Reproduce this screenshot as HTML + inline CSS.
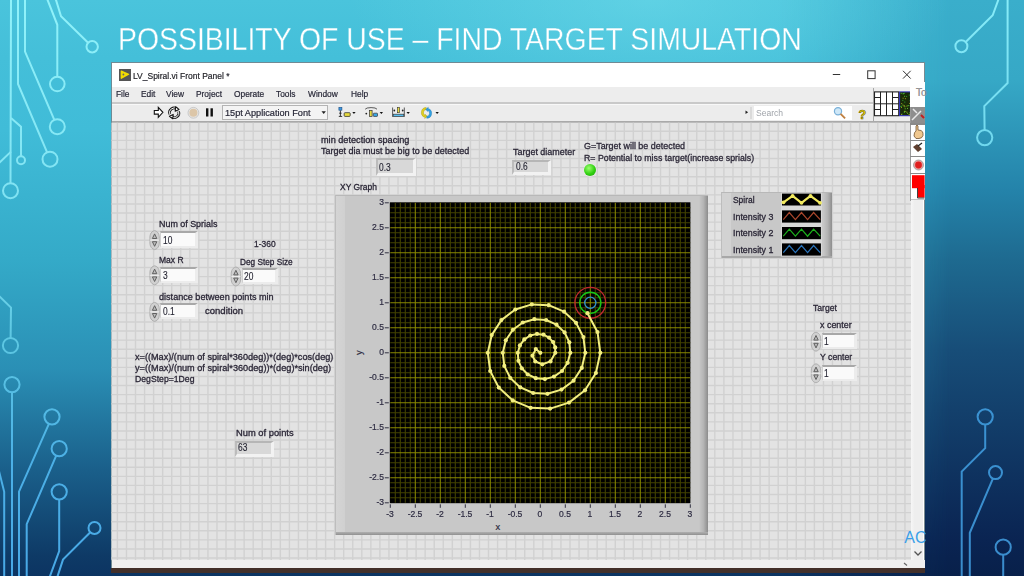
<!DOCTYPE html><html><head><meta charset="utf-8"><style>*{margin:0;padding:0;box-sizing:border-box}
html,body{width:1024px;height:576px;overflow:hidden}
body{position:relative;font-family:"Liberation Sans",sans-serif;background:linear-gradient(180deg,#4ac4dc 0%,#44bfd9 10%,#40bcd8 22.6%,#34aac8 45.1%,#2a8fb5 64.2%,#1a5f8a 81.6%,#0e3a66 96.5%,#0c3462 100%)}
.abs{position:absolute;white-space:pre}
.lbl{position:absolute;white-space:pre;font-size:9px;color:#2a2636;line-height:1;-webkit-text-stroke:0.3px #2a2636}
.num{position:absolute;white-space:pre;font-size:10px;line-height:1;color:#1e1e2c;transform-origin:0 0;transform:scaleX(0.84);-webkit-text-stroke:0.12px #1e1e2c}
.menu{position:absolute;white-space:pre;font-size:9.3px;color:#262636;line-height:1;-webkit-text-stroke:0.2px #262636}
.tick{position:absolute;white-space:pre;font-size:9.3px;color:#2c2a40;line-height:1;-webkit-text-stroke:0.2px #2c2a40}
</style></head><body><div class="abs" style="left:0;top:0;width:1024px;height:576px;background:linear-gradient(180deg,#3aaecb 0%,#36a8c6 13.9%,#2483aa 33%,#1e6a90 45.1%,#174d78 60.8%,#0a2452 93.75%,#08204a 100%);-webkit-mask-image:linear-gradient(90deg,transparent 0,transparent 780px,#000 950px);mask-image:linear-gradient(90deg,transparent 0,transparent 780px,#000 950px)"></div><div class="abs" style="left:0;top:0;width:1024px;height:576px;background:radial-gradient(ellipse 300px 120px at 650px 0px,rgba(120,225,238,0.45),rgba(120,225,238,0) 100%)"></div><svg width="1024" height="576" style="position:absolute;left:0;top:0"><defs><linearGradient id="cg" gradientUnits="userSpaceOnUse" x1="0" y1="0" x2="0" y2="576"><stop offset="0" stop-color="#90f2fa"/><stop offset="0.35" stop-color="#80e2f2"/><stop offset="0.6" stop-color="#5cc6e2"/><stop offset="0.8" stop-color="#4cb0e6"/><stop offset="1" stop-color="#48a8e6"/></linearGradient><linearGradient id="cg2" gradientUnits="userSpaceOnUse" x1="0" y1="0" x2="0" y2="576"><stop offset="0" stop-color="#88ecf8"/><stop offset="0.25" stop-color="#70d8ee"/><stop offset="0.72" stop-color="#3a92d2"/><stop offset="1" stop-color="#3a8ccc"/></linearGradient></defs><g fill="none" stroke="url(#cg)" stroke-width="2"><polyline points="11.0,-2.0 11.0,0.0 10.5,183.2"/><circle cx="10.5" cy="190.7" r="7.5"/><polyline points="11.0,118.0 21.0,126.7 21.0,156.2"/><circle cx="21.0" cy="160.2" r="4.0"/><polyline points="11.0,151.6 -1.0,163.0"/><polyline points="18.0,-2.0 18.0,84.0 47.1,152.3"/><circle cx="50.0" cy="159.2" r="7.5"/><polyline points="25.0,-2.0 25.0,51.6 54.3,119.8"/><circle cx="57.3" cy="126.7" r="7.5"/><polyline points="46.8,-2.0 57.3,24.8 57.3,76.7"/><circle cx="57.3" cy="84.0" r="7.3"/><polyline points="55.4,-2.0 61.0,16.2 88.1,42.8"/><circle cx="92.2" cy="46.8" r="5.7"/><polyline points="-2.0,295.0 11.0,307.6 10.6,337.9"/><circle cx="10.5" cy="345.5" r="7.6"/><polyline points="12.0,578.0 12.0,392.2"/><circle cx="12.0" cy="384.6" r="7.6"/><polyline points="19.0,578.0 19.0,491.7 48.9,423.8"/><circle cx="52.0" cy="416.8" r="7.6"/><polyline points="26.7,578.0 26.7,524.2 56.2,455.7"/><circle cx="59.2" cy="448.7" r="7.6"/><polyline points="49.3,578.0 59.2,551.0 59.2,499.4"/><circle cx="59.2" cy="491.8" r="7.6"/><polyline points="57.0,578.0 63.0,559.6 90.3,532.2"/><circle cx="94.5" cy="528.0" r="6.0"/><polyline points="-1.0,471.0 4.2,491.8 4.2,578.0"/></g><g fill="none" stroke="url(#cg2)" stroke-width="2"><polyline points="999.0,-2.0 992.7,15.3 965.7,42.0"/><circle cx="961.4" cy="46.2" r="6.0"/><polyline points="1007.6,-2.0 1007.6,83.0 984.3,106.1 984.6,130.0"/><circle cx="984.7" cy="137.6" r="7.6"/><polyline points="961.7,578.0 961.7,471.6 985.2,448.1 985.2,424.4"/><circle cx="985.2" cy="416.8" r="7.6"/><polyline points="969.8,578.0 969.8,532.8 992.9,478.6"/><circle cx="995.5" cy="472.6" r="6.5"/><polyline points="1003.2,578.0 1003.2,554.8"/><circle cx="1003.2" cy="547.2" r="7.6"/></g></svg><div class="abs" style="left:117.8px;top:22px;font-size:30.5px;line-height:34px;color:#fff;-webkit-text-stroke:0.35px #52c6dc;transform-origin:0 0;transform:scaleX(0.931)">POSSIBILITY OF USE – FIND TARGET SIMULATION</div><div class="abs" style="left:111px;top:62px;width:814px;height:511px;background:#fff;border-top:1px solid #708a94;border-left:1px solid #6f8a94;border-right:1px solid #5a7080"></div><div class="abs" style="left:111.5px;top:86.9px;width:813px;height:15px;background:#ededed"></div><div class="abs" style="left:111.5px;top:101.8px;width:813px;height:1.8px;background:#c9c9c9"></div><div class="abs" style="left:111.5px;top:103.6px;width:813px;height:1px;background:#f8f8f8"></div><div class="abs" style="left:111.5px;top:104.6px;width:813px;height:16.3px;background:#ececec"></div><div class="abs" style="left:111.5px;top:120.8px;width:813px;height:2px;background:#a9a9a9"></div><svg width="1024" height="576" style="position:absolute;left:0;top:0"><rect x="111.5" y="122.7" width="799.5" height="437.5" fill="#e3e3e3"/><path d="M117.40 122.7V560.2M126.45 122.7V560.2M135.50 122.7V560.2M144.56 122.7V560.2M153.61 122.7V560.2M162.66 122.7V560.2M171.71 122.7V560.2M180.76 122.7V560.2M189.82 122.7V560.2M198.87 122.7V560.2M207.92 122.7V560.2M216.97 122.7V560.2M226.02 122.7V560.2M235.08 122.7V560.2M244.13 122.7V560.2M253.18 122.7V560.2M262.23 122.7V560.2M271.28 122.7V560.2M280.34 122.7V560.2M289.39 122.7V560.2M298.44 122.7V560.2M307.49 122.7V560.2M316.54 122.7V560.2M325.60 122.7V560.2M334.65 122.7V560.2M343.70 122.7V560.2M352.75 122.7V560.2M361.80 122.7V560.2M370.86 122.7V560.2M379.91 122.7V560.2M388.96 122.7V560.2M398.01 122.7V560.2M407.06 122.7V560.2M416.12 122.7V560.2M425.17 122.7V560.2M434.22 122.7V560.2M443.27 122.7V560.2M452.32 122.7V560.2M461.38 122.7V560.2M470.43 122.7V560.2M479.48 122.7V560.2M488.53 122.7V560.2M497.58 122.7V560.2M506.64 122.7V560.2M515.69 122.7V560.2M524.74 122.7V560.2M533.79 122.7V560.2M542.84 122.7V560.2M551.90 122.7V560.2M560.95 122.7V560.2M570.00 122.7V560.2M579.05 122.7V560.2M588.10 122.7V560.2M597.16 122.7V560.2M606.21 122.7V560.2M615.26 122.7V560.2M624.31 122.7V560.2M633.36 122.7V560.2M642.42 122.7V560.2M651.47 122.7V560.2M660.52 122.7V560.2M669.57 122.7V560.2M678.62 122.7V560.2M687.68 122.7V560.2M696.73 122.7V560.2M705.78 122.7V560.2M714.83 122.7V560.2M723.88 122.7V560.2M732.94 122.7V560.2M741.99 122.7V560.2M751.04 122.7V560.2M760.09 122.7V560.2M769.14 122.7V560.2M778.20 122.7V560.2M787.25 122.7V560.2M796.30 122.7V560.2M805.35 122.7V560.2M814.40 122.7V560.2M823.46 122.7V560.2M832.51 122.7V560.2M841.56 122.7V560.2M850.61 122.7V560.2M859.66 122.7V560.2M868.72 122.7V560.2M877.77 122.7V560.2M886.82 122.7V560.2M895.87 122.7V560.2M904.92 122.7V560.2M111.5 131.30H911.0M111.5 140.38H911.0M111.5 149.46H911.0M111.5 158.54H911.0M111.5 167.62H911.0M111.5 176.70H911.0M111.5 185.78H911.0M111.5 194.86H911.0M111.5 203.94H911.0M111.5 213.02H911.0M111.5 222.10H911.0M111.5 231.18H911.0M111.5 240.26H911.0M111.5 249.34H911.0M111.5 258.42H911.0M111.5 267.50H911.0M111.5 276.58H911.0M111.5 285.66H911.0M111.5 294.74H911.0M111.5 303.82H911.0M111.5 312.90H911.0M111.5 321.98H911.0M111.5 331.06H911.0M111.5 340.14H911.0M111.5 349.22H911.0M111.5 358.30H911.0M111.5 367.38H911.0M111.5 376.46H911.0M111.5 385.54H911.0M111.5 394.62H911.0M111.5 403.70H911.0M111.5 412.78H911.0M111.5 421.86H911.0M111.5 430.94H911.0M111.5 440.02H911.0M111.5 449.10H911.0M111.5 458.18H911.0M111.5 467.26H911.0M111.5 476.34H911.0M111.5 485.42H911.0M111.5 494.50H911.0M111.5 503.58H911.0M111.5 512.66H911.0M111.5 521.74H911.0M111.5 530.82H911.0M111.5 539.90H911.0M111.5 548.98H911.0M111.5 558.06H911.0" stroke="#d1d1d1" stroke-width="1.4" fill="none"/></svg><div class="abs" style="left:911px;top:122.7px;width:11.8px;height:445px;background:linear-gradient(90deg,#f6f6f6,#eeeeee 30%,#eeeeee)"></div><div class="abs" style="left:922.8px;top:122.7px;width:1.4px;height:445px;background:#fff"></div><div class="abs" style="left:924.1px;top:62px;width:0.9px;height:511px;background:#7a8a90"></div><div class="abs" style="left:111.5px;top:560.2px;width:813px;height:7.5px;background:#f0f0f0"></div><div class="abs" style="left:111px;top:567.5px;width:814px;height:5.5px;background:#43302a"></div><svg class="abs" style="left:0;top:0" width="1024" height="576"><path d="M914.5 551.5l3.5 3.5 3.5-3.5" stroke="#555" stroke-width="1.3" fill="none"/><path d="M904 563l3 2.5" stroke="#666" stroke-width="1.2"/></svg><div class="abs" style="left:119.1px;top:69px;width:11.9px;height:11.7px;background:#555"></div><svg class="abs" style="left:0;top:0" width="1024" height="576"><path d="M121.3 71.2 L128.6 74.3 L121.3 78.3 Z" fill="#f4dc00" stroke="#f4dc00" stroke-width="1.3" stroke-linejoin="round"/><circle cx="123.4" cy="74.5" r="0.9" fill="#666"/></svg><div class="menu" style="left:133.2px;top:71px;font-size:9.6px;color:#222;transform-origin:0 0;transform:scaleX(0.885)">LV_Spiral.vi Front Panel *</div><svg class="abs" style="left:0;top:0" width="1024" height="576" stroke="#333" fill="none" stroke-width="1"><path d="M832.8 74.5H840.2"/><rect x="867.7" y="70.8" width="7.4" height="7.8"/><path d="M903 70.8L910.7 78.6M910.7 70.8L903 78.6"/></svg><div class="menu" style="left:115.9px;top:90px;transform-origin:0 0;transform:scaleX(0.9)">File</div><div class="menu" style="left:140.5px;top:90px;transform-origin:0 0;transform:scaleX(0.9)">Edit</div><div class="menu" style="left:165.8px;top:90px;transform-origin:0 0;transform:scaleX(0.9)">View</div><div class="menu" style="left:195.6px;top:90px;transform-origin:0 0;transform:scaleX(0.9)">Project</div><div class="menu" style="left:233.5px;top:90px;transform-origin:0 0;transform:scaleX(0.9)">Operate</div><div class="menu" style="left:276.4px;top:90px;transform-origin:0 0;transform:scaleX(0.9)">Tools</div><div class="menu" style="left:307.6px;top:90px;transform-origin:0 0;transform:scaleX(0.9)">Window</div><div class="menu" style="left:351.4px;top:90px;transform-origin:0 0;transform:scaleX(0.9)">Help</div><svg class="abs" style="left:0;top:0" width="1024" height="576"><path d="M154.3 110.5h4v-3.2l4.6 5-4.6 5v-3.2h-4z" fill="#fff" stroke="#111" stroke-width="1.1"/><g fill="none" stroke="#151515" stroke-width="1.1" stroke-linejoin="round"><path d="M169.8 114.2a4.6 4.6 0 0 1 7.2-5.2" stroke-width="2.6"/><path d="M169.8 114.2a4.6 4.6 0 0 1 7.2-5.2" stroke="#fff" stroke-width="1"/><path d="M178.6 111.4a4.6 4.6 0 0 1-7.2 5.2" stroke-width="2.6"/><path d="M178.6 111.4a4.6 4.6 0 0 1-7.2 5.2" stroke="#fff" stroke-width="1"/><path d="M175.6 106.8l3.4 2.6-3.8 1.8z" fill="#fff"/><path d="M172.8 118.8l-3.4-2.6 3.8-1.8z" fill="#fff"/></g><circle cx="193.4" cy="112.8" r="5.4" fill="#e6e6e6" stroke="#c0c0c0" stroke-width="0.8"/><circle cx="193.4" cy="112.8" r="4" fill="#dcc6a8"/><rect x="206" y="108.3" width="2.4" height="8.2" fill="#111"/><rect x="210.5" y="108.3" width="2.4" height="8.2" fill="#111"/></svg><div class="abs" style="left:222.3px;top:105.3px;width:106px;height:14.5px;background:#f4f4f4;border:1px solid #b4b4b4"></div><div class="menu" style="left:225.4px;top:108.2px;font-size:9.6px;transform-origin:0 0;transform:scaleX(0.955)">15pt Application Font</div><svg class="abs" style="left:0;top:0" width="1024" height="576"><path d="M321.5 111.3h4.4l-2.2 2.6z" fill="#222"/><rect x="338.9" y="107.4" width="3" height="2.8" fill="#3a98e0" stroke="#1a4a80" stroke-width="0.6"/><path d="M340.4 110.5v5.8M338.8 116.4h3.4M339.2 113.2h2.4" stroke="#222" stroke-width="0.9" fill="none"/><rect x="344.2" y="112.7" width="6" height="3.7" rx="0.8" fill="#e8dc40" stroke="#333" stroke-width="0.8"/><path d="M352.3 112h3.3l-1.65 1.9z" fill="#111"/><path d="M365.2 109.2q1-1.6 5.9-1.6t5.9 1.6" stroke="#333" stroke-width="0.8" fill="none"/><circle cx="366.3" cy="113.6" r="0.9" fill="#222"/><rect x="369.5" y="110.5" width="2.6" height="5.9" fill="#e8dc40" stroke="#333" stroke-width="0.7"/><rect x="373.3" y="113.2" width="4.2" height="3.2" rx="0.6" fill="#3aa8e8" stroke="#333" stroke-width="0.7"/><path d="M379.7 112h3.3l-1.65 1.9z" fill="#111"/><path d="M392.6 107.5v9.4M404.3 107.5v9.4" stroke="#333" stroke-width="0.8"/><circle cx="394.3" cy="110.5" r="0.9" fill="#222"/><circle cx="402.7" cy="110.5" r="0.9" fill="#222"/><rect x="397.4" y="107.3" width="2.2" height="5.4" fill="#e8dc40" stroke="#333" stroke-width="0.6"/><rect x="393.2" y="114.2" width="10.6" height="2.3" fill="#5ac0f0" stroke="#333" stroke-width="0.7"/><path d="M406.5 112h3.3l-1.65 1.9z" fill="#111"/><path d="M426.2 107.5a5 5 0 0 0-1.2 9.8l-0.3 1.2 2.6-2.2-2.2-2 0.2 1.2a3.2 3.2 0 0 1 1-6.1z" fill="#e0d020" stroke="#a09000" stroke-width="0.4"/><path d="M426.8 118.3a5 5 0 0 0 1.2-9.8l0.3-1.2-2.6 2.2 2.2 2-0.2-1.2a3.2 3.2 0 0 1-1 6.1z" fill="#30a0e0" stroke="#1070b0" stroke-width="0.4"/><path d="M435.5 112h3.3l-1.65 1.9z" fill="#111"/></svg><div class="abs" style="left:873.3px;top:88px;width:1px;height:33px;background:#a8a8a8"></div><div class="abs" style="left:753.9px;top:105.5px;width:98.5px;height:14.3px;background:#fff"></div><div class="menu" style="left:755.8px;top:108.3px;font-size:9.5px;color:#a0a4aa;-webkit-text-stroke:0px;transform-origin:0 0;transform:scaleX(0.9)">Search</div><svg class="abs" style="left:0;top:0" width="1024" height="576"><path d="M745.5 110.5l2.6 1.8-2.6 1.8z" fill="#222"/><path d="M751 107v12" stroke="#c8c8c8"/><circle cx="838" cy="111.2" r="3.6" fill="#cfe8f8" stroke="#7ab0d8" stroke-width="1.2"/><path d="M840.6 113.8l4.5 4.5" stroke="#c08040" stroke-width="1.8"/><text x="858.5" y="118.5" font-family="Liberation Sans" font-weight="bold" font-size="12.5" fill="#f2e000" stroke="#6a5a00" stroke-width="0.6">?</text><rect x="874.5" y="91.9" width="24.2" height="23.8" fill="#fff" stroke="#222" stroke-width="1.1"/><path d="M874.5 103.8h24.2M880.5 91.9v23.8M886.5 91.9v23.8M892.5 91.9v23.8M874.5 97.5h6M874.5 109.5h6M892.5 97.5h6M892.5 109.5h6" stroke="#222" stroke-width="1"/><rect x="899.6" y="91.9" width="10.8" height="23.8" fill="#1a2a08" stroke="#3030c0" stroke-width="1"/></svg><svg class="abs" style="left:0;top:0" width="1024" height="576"><rect x="902.4" y="104.5" width="1" height="1" fill="#60c030"/><rect x="909.2" y="102.9" width="1" height="1" fill="#a0a020"/><rect x="900.7" y="92.8" width="1" height="1" fill="#60c030"/><rect x="902.6" y="97.7" width="1" height="1" fill="#a0a020"/><rect x="904.7" y="110.9" width="1" height="1" fill="#60c030"/><rect x="904.0" y="111.4" width="1" height="1" fill="#30a030"/><rect x="906.3" y="111.6" width="1" height="1" fill="#a0a020"/><rect x="903.9" y="92.8" width="1" height="1" fill="#30a030"/><rect x="901.6" y="113.6" width="1" height="1" fill="#30a030"/><rect x="903.0" y="93.2" width="1" height="1" fill="#60c030"/><rect x="904.7" y="108.3" width="1" height="1" fill="#60c030"/><rect x="907.1" y="112.8" width="1" height="1" fill="#60c030"/><rect x="907.3" y="105.2" width="1" height="1" fill="#30a030"/><rect x="908.8" y="94.6" width="1" height="1" fill="#30a030"/><rect x="904.9" y="98.2" width="1" height="1" fill="#a0a020"/><rect x="904.4" y="106.3" width="1" height="1" fill="#60c030"/><rect x="904.2" y="110.8" width="1" height="1" fill="#a0a020"/><rect x="903.5" y="105.4" width="1" height="1" fill="#a0a020"/><rect x="902.3" y="99.9" width="1" height="1" fill="#30a030"/><rect x="908.6" y="114.3" width="1" height="1" fill="#a0a020"/><rect x="907.0" y="107.9" width="1" height="1" fill="#60c030"/><rect x="909.6" y="112.4" width="1" height="1" fill="#a0a020"/><rect x="901.0" y="106.9" width="1" height="1" fill="#a0a020"/><rect x="908.3" y="105.1" width="1" height="1" fill="#60c030"/><rect x="901.2" y="103.1" width="1" height="1" fill="#a0a020"/><rect x="909.9" y="94.4" width="1" height="1" fill="#30a030"/><rect x="904.1" y="95.8" width="1" height="1" fill="#60c030"/><rect x="904.3" y="101.6" width="1" height="1" fill="#30a030"/><rect x="900.4" y="106.0" width="1" height="1" fill="#30a030"/><rect x="903.8" y="105.4" width="1" height="1" fill="#a0a020"/><rect x="908.8" y="114.1" width="1" height="1" fill="#a0a020"/><rect x="902.4" y="93.3" width="1" height="1" fill="#30a030"/><rect x="900.8" y="105.7" width="1" height="1" fill="#30a030"/><rect x="909.5" y="113.9" width="1" height="1" fill="#60c030"/><rect x="906.1" y="95.9" width="1" height="1" fill="#30a030"/><rect x="909.8" y="100.0" width="1" height="1" fill="#60c030"/><rect x="909.6" y="112.2" width="1" height="1" fill="#60c030"/><rect x="903.8" y="111.6" width="1" height="1" fill="#60c030"/><rect x="906.4" y="105.6" width="1" height="1" fill="#a0a020"/><rect x="901.0" y="113.9" width="1" height="1" fill="#a0a020"/></svg><div class="abs" style="left:910.4px;top:81.8px;width:14.2px;height:118.5px;background:#fff;border-bottom:1.2px solid #c4c4c4"></div><div class="menu" style="left:916px;top:87.5px;font-size:10px;color:#a8a8a8">To</div><div class="abs" style="left:910.4px;top:106.5px;width:14.2px;height:17px;background:#8e8e8e"></div><div class="abs" style="left:909.8px;top:106.5px;width:1px;height:94px;background:#9a9a9a"></div><div class="abs" style="left:910.4px;top:123.4px;width:14.2px;height:1.2px;background:#8a8a8a"></div><div class="abs" style="left:910.4px;top:140.3px;width:14.2px;height:1.2px;background:#8a8a8a"></div><div class="abs" style="left:910.4px;top:156px;width:14.2px;height:1.2px;background:#8a8a8a"></div><div class="abs" style="left:910.4px;top:173px;width:14.2px;height:1.2px;background:#8a8a8a"></div><svg class="abs" style="left:0;top:0" width="1024" height="576"><path d="M912 120l9-9M913 109l4 4" stroke="#e8e8e8" stroke-width="1.5"/><path d="M921 115l3 3" stroke="#c02020" stroke-width="2"/><path d="M914 136q0-4 2-5v-5q1-2 2 0v4l3 0.5q2 1 2 3v2q-1 3-4 3h-3z" fill="#f0c890" stroke="#604020" stroke-width="0.7"/><path d="M913 147l5 5 4-3-5-5z" fill="#604030"/><path d="M918 146l4-3" stroke="#222" stroke-width="1.2"/><circle cx="918.5" cy="165" r="5" fill="#e8a0a0" stroke="#999" stroke-width="0.8"/><circle cx="918.5" cy="165" r="3.4" fill="#e02020"/><rect x="912" y="175.2" width="12.6" height="13" fill="#ff0000"/><rect x="918" y="185" width="6.6" height="12.5" fill="#ff0000"/><path d="M917.5 188v10h7" stroke="#111" stroke-width="0.8" fill="none"/></svg><div class="abs" style="left:335px;top:195.3px;width:372.9px;height:339.3px;background:#c8c8c8;border-top:1px solid #b8b8b8;border-left:1px solid #bdbdbd"></div><div class="abs" style="left:336px;top:196.4px;width:8.5px;height:338px;background:linear-gradient(90deg,#d4d4d4,#d0d0d0)"></div><div class="abs" style="left:699.3px;top:196.3px;width:8.6px;height:338px;background:linear-gradient(90deg,#c8c8c8,#b4b4b4 50%,#8c8c8c)"></div><div class="abs" style="left:336px;top:531.9px;width:371.9px;height:2.7px;background:linear-gradient(180deg,#b0b0b0,#909090)"></div><svg width="1024" height="576" style="position:absolute;left:0;top:0"><rect x="389.8" y="202.3" width="300.6" height="300.9" fill="#000"/><path d="M395.30 202.8V502.8M390.3 497.80H690.3M400.30 202.8V502.8M390.3 492.80H690.3M405.30 202.8V502.8M390.3 487.80H690.3M410.30 202.8V502.8M390.3 482.80H690.3M420.30 202.8V502.8M390.3 472.80H690.3M425.30 202.8V502.8M390.3 467.80H690.3M430.30 202.8V502.8M390.3 462.80H690.3M435.30 202.8V502.8M390.3 457.80H690.3M445.30 202.8V502.8M390.3 447.80H690.3M450.30 202.8V502.8M390.3 442.80H690.3M455.30 202.8V502.8M390.3 437.80H690.3M460.30 202.8V502.8M390.3 432.80H690.3M470.30 202.8V502.8M390.3 422.80H690.3M475.30 202.8V502.8M390.3 417.80H690.3M480.30 202.8V502.8M390.3 412.80H690.3M485.30 202.8V502.8M390.3 407.80H690.3M495.30 202.8V502.8M390.3 397.80H690.3M500.30 202.8V502.8M390.3 392.80H690.3M505.30 202.8V502.8M390.3 387.80H690.3M510.30 202.8V502.8M390.3 382.80H690.3M520.30 202.8V502.8M390.3 372.80H690.3M525.30 202.8V502.8M390.3 367.80H690.3M530.30 202.8V502.8M390.3 362.80H690.3M535.30 202.8V502.8M390.3 357.80H690.3M545.30 202.8V502.8M390.3 347.80H690.3M550.30 202.8V502.8M390.3 342.80H690.3M555.30 202.8V502.8M390.3 337.80H690.3M560.30 202.8V502.8M390.3 332.80H690.3M570.30 202.8V502.8M390.3 322.80H690.3M575.30 202.8V502.8M390.3 317.80H690.3M580.30 202.8V502.8M390.3 312.80H690.3M585.30 202.8V502.8M390.3 307.80H690.3M595.30 202.8V502.8M390.3 297.80H690.3M600.30 202.8V502.8M390.3 292.80H690.3M605.30 202.8V502.8M390.3 287.80H690.3M610.30 202.8V502.8M390.3 282.80H690.3M620.30 202.8V502.8M390.3 272.80H690.3M625.30 202.8V502.8M390.3 267.80H690.3M630.30 202.8V502.8M390.3 262.80H690.3M635.30 202.8V502.8M390.3 257.80H690.3M645.30 202.8V502.8M390.3 247.80H690.3M650.30 202.8V502.8M390.3 242.80H690.3M655.30 202.8V502.8M390.3 237.80H690.3M660.30 202.8V502.8M390.3 232.80H690.3M670.30 202.8V502.8M390.3 222.80H690.3M675.30 202.8V502.8M390.3 217.80H690.3M680.30 202.8V502.8M390.3 212.80H690.3M685.30 202.8V502.8M390.3 207.80H690.3" stroke="#424200" stroke-width="1.1" fill="none"/><path d="M415.30 202.8V502.8M390.3 477.80H690.3M440.30 202.8V502.8M390.3 452.80H690.3M465.30 202.8V502.8M390.3 427.80H690.3M490.30 202.8V502.8M390.3 402.80H690.3M515.30 202.8V502.8M390.3 377.80H690.3M540.30 202.8V502.8M390.3 352.80H690.3M565.30 202.8V502.8M390.3 327.80H690.3M590.30 202.8V502.8M390.3 302.80H690.3M615.30 202.8V502.8M390.3 277.80H690.3M640.30 202.8V502.8M390.3 252.80H690.3M665.30 202.8V502.8M390.3 227.80H690.3" stroke="#888800" stroke-width="1.05" fill="none"/><circle cx="590.3" cy="302.8" r="15.4" stroke="#c02830" stroke-width="1.3" fill="none"/><circle cx="590.3" cy="302.8" r="10.6" stroke="#18c818" stroke-width="1.4" fill="none"/><circle cx="590.3" cy="302.8" r="5.6" stroke="#3090d0" stroke-width="1.3" fill="none"/><polyline points="540.3,352.8 535.8,349.1 532.5,355.7 535.3,361.5 542.3,364.3 550.5,361.4 555.3,352.8 555.2,347.4 553.1,342.1 549.0,337.6 543.5,334.7 537.0,333.9 530.3,335.5 524.3,339.4 519.9,345.4 517.8,352.8 518.4,360.8 521.8,368.3 527.8,374.5 535.8,378.2 544.9,379.1 554.0,376.6 562.0,371.0 567.7,362.8 570.3,352.8 569.3,342.3 564.6,332.4 556.5,324.7 546.1,320.0 534.4,319.2 522.8,322.5 512.9,329.8 505.8,340.3 502.8,352.8 504.3,365.9 510.3,378.0 520.3,387.4 533.2,393.0 547.5,393.8 561.5,389.6 573.5,380.7 581.8,367.9 585.3,352.8 583.4,337.1 576.0,322.8 564.1,311.7 548.7,305.2 531.8,304.4 515.3,309.5 501.4,320.1 491.7,335.1 487.8,352.8 490.2,371.0 498.8,387.6 512.8,400.4 530.6,407.8 550.1,408.6 569.0,402.6 585.0,390.3 595.9,373.0 600.3,352.8 597.5,332.0 587.5,313.2" stroke="#f2ee80" stroke-width="2" fill="none" stroke-linejoin="round"/><g fill="#f2ee80"><circle cx="540.3" cy="352.8" r="2.1"/><circle cx="535.8" cy="349.1" r="2.1"/><circle cx="532.5" cy="355.7" r="2.1"/><circle cx="535.3" cy="361.5" r="2.1"/><circle cx="542.3" cy="364.3" r="2.1"/><circle cx="550.5" cy="361.4" r="2.1"/><circle cx="555.3" cy="352.8" r="2.1"/><circle cx="555.2" cy="347.4" r="2.1"/><circle cx="553.1" cy="342.1" r="2.1"/><circle cx="549.0" cy="337.6" r="2.1"/><circle cx="543.5" cy="334.7" r="2.1"/><circle cx="537.0" cy="333.9" r="2.1"/><circle cx="530.3" cy="335.5" r="2.1"/><circle cx="524.3" cy="339.4" r="2.1"/><circle cx="519.9" cy="345.4" r="2.1"/><circle cx="517.8" cy="352.8" r="2.1"/><circle cx="518.4" cy="360.8" r="2.1"/><circle cx="521.8" cy="368.3" r="2.1"/><circle cx="527.8" cy="374.5" r="2.1"/><circle cx="535.8" cy="378.2" r="2.1"/><circle cx="544.9" cy="379.1" r="2.1"/><circle cx="554.0" cy="376.6" r="2.1"/><circle cx="562.0" cy="371.0" r="2.1"/><circle cx="567.7" cy="362.8" r="2.1"/><circle cx="570.3" cy="352.8" r="2.1"/><circle cx="569.3" cy="342.3" r="2.1"/><circle cx="564.6" cy="332.4" r="2.1"/><circle cx="556.5" cy="324.7" r="2.1"/><circle cx="546.1" cy="320.0" r="2.1"/><circle cx="534.4" cy="319.2" r="2.1"/><circle cx="522.8" cy="322.5" r="2.1"/><circle cx="512.9" cy="329.8" r="2.1"/><circle cx="505.8" cy="340.3" r="2.1"/><circle cx="502.8" cy="352.8" r="2.1"/><circle cx="504.3" cy="365.9" r="2.1"/><circle cx="510.3" cy="378.0" r="2.1"/><circle cx="520.3" cy="387.4" r="2.1"/><circle cx="533.2" cy="393.0" r="2.1"/><circle cx="547.5" cy="393.8" r="2.1"/><circle cx="561.5" cy="389.6" r="2.1"/><circle cx="573.5" cy="380.7" r="2.1"/><circle cx="581.8" cy="367.9" r="2.1"/><circle cx="585.3" cy="352.8" r="2.1"/><circle cx="583.4" cy="337.1" r="2.1"/><circle cx="576.0" cy="322.8" r="2.1"/><circle cx="564.1" cy="311.7" r="2.1"/><circle cx="548.7" cy="305.2" r="2.1"/><circle cx="531.8" cy="304.4" r="2.1"/><circle cx="515.3" cy="309.5" r="2.1"/><circle cx="501.4" cy="320.1" r="2.1"/><circle cx="491.7" cy="335.1" r="2.1"/><circle cx="487.8" cy="352.8" r="2.1"/><circle cx="490.2" cy="371.0" r="2.1"/><circle cx="498.8" cy="387.6" r="2.1"/><circle cx="512.8" cy="400.4" r="2.1"/><circle cx="530.6" cy="407.8" r="2.1"/><circle cx="550.1" cy="408.6" r="2.1"/><circle cx="569.0" cy="402.6" r="2.1"/><circle cx="585.0" cy="390.3" r="2.1"/><circle cx="595.9" cy="373.0" r="2.1"/><circle cx="600.3" cy="352.8" r="2.1"/><circle cx="597.5" cy="332.0" r="2.1"/><circle cx="587.5" cy="313.2" r="2.1"/></g><path d="M390.30 504.3V507.8M384.8 502.80H388.8M415.30 504.3V507.8M384.8 477.80H388.8M440.30 504.3V507.8M384.8 452.80H388.8M465.30 504.3V507.8M384.8 427.80H388.8M490.30 504.3V507.8M384.8 402.80H388.8M515.30 504.3V507.8M384.8 377.80H388.8M540.30 504.3V507.8M384.8 352.80H388.8M565.30 504.3V507.8M384.8 327.80H388.8M590.30 504.3V507.8M384.8 302.80H388.8M615.30 504.3V507.8M384.8 277.80H388.8M640.30 504.3V507.8M384.8 252.80H388.8M665.30 504.3V507.8M384.8 227.80H388.8M690.30 504.3V507.8M384.8 202.80H388.8" stroke="#303040" stroke-width="1" fill="none"/></svg><div class="lbl" style="left:339.5px;top:182.34px;font-size:9.4px;transform-origin:0 0;transform:scaleX(0.902)">XY Graph</div><div class="tick" style="left:333.5px;top:498.2px;width:50px;text-align:right;transform-origin:100% 0;transform:scaleX(0.92)">-3</div><div class="tick" style="left:370.3px;top:509.8px;width:40px;text-align:center;transform:scaleX(0.92)">-3</div><div class="tick" style="left:333.5px;top:473.2px;width:50px;text-align:right;transform-origin:100% 0;transform:scaleX(0.92)">-2.5</div><div class="tick" style="left:395.3px;top:509.8px;width:40px;text-align:center;transform:scaleX(0.92)">-2.5</div><div class="tick" style="left:333.5px;top:448.2px;width:50px;text-align:right;transform-origin:100% 0;transform:scaleX(0.92)">-2</div><div class="tick" style="left:420.3px;top:509.8px;width:40px;text-align:center;transform:scaleX(0.92)">-2</div><div class="tick" style="left:333.5px;top:423.2px;width:50px;text-align:right;transform-origin:100% 0;transform:scaleX(0.92)">-1.5</div><div class="tick" style="left:445.3px;top:509.8px;width:40px;text-align:center;transform:scaleX(0.92)">-1.5</div><div class="tick" style="left:333.5px;top:398.2px;width:50px;text-align:right;transform-origin:100% 0;transform:scaleX(0.92)">-1</div><div class="tick" style="left:470.3px;top:509.8px;width:40px;text-align:center;transform:scaleX(0.92)">-1</div><div class="tick" style="left:333.5px;top:373.2px;width:50px;text-align:right;transform-origin:100% 0;transform:scaleX(0.92)">-0.5</div><div class="tick" style="left:495.3px;top:509.8px;width:40px;text-align:center;transform:scaleX(0.92)">-0.5</div><div class="tick" style="left:333.5px;top:348.2px;width:50px;text-align:right;transform-origin:100% 0;transform:scaleX(0.92)">0</div><div class="tick" style="left:520.3px;top:509.8px;width:40px;text-align:center;transform:scaleX(0.92)">0</div><div class="tick" style="left:333.5px;top:323.2px;width:50px;text-align:right;transform-origin:100% 0;transform:scaleX(0.92)">0.5</div><div class="tick" style="left:545.3px;top:509.8px;width:40px;text-align:center;transform:scaleX(0.92)">0.5</div><div class="tick" style="left:333.5px;top:298.2px;width:50px;text-align:right;transform-origin:100% 0;transform:scaleX(0.92)">1</div><div class="tick" style="left:570.3px;top:509.8px;width:40px;text-align:center;transform:scaleX(0.92)">1</div><div class="tick" style="left:333.5px;top:273.2px;width:50px;text-align:right;transform-origin:100% 0;transform:scaleX(0.92)">1.5</div><div class="tick" style="left:595.3px;top:509.8px;width:40px;text-align:center;transform:scaleX(0.92)">1.5</div><div class="tick" style="left:333.5px;top:248.2px;width:50px;text-align:right;transform-origin:100% 0;transform:scaleX(0.92)">2</div><div class="tick" style="left:620.3px;top:509.8px;width:40px;text-align:center;transform:scaleX(0.92)">2</div><div class="tick" style="left:333.5px;top:223.2px;width:50px;text-align:right;transform-origin:100% 0;transform:scaleX(0.92)">2.5</div><div class="tick" style="left:645.3px;top:509.8px;width:40px;text-align:center;transform:scaleX(0.92)">2.5</div><div class="tick" style="left:333.5px;top:198.2px;width:50px;text-align:right;transform-origin:100% 0;transform:scaleX(0.92)">3</div><div class="tick" style="left:670.3px;top:509.8px;width:40px;text-align:center;transform:scaleX(0.92)">3</div><div class="tick" style="left:495.5px;top:522.5px">x</div><div class="tick" style="left:357px;top:347.5px;transform:rotate(-90deg)">y</div><div class="abs" style="left:721px;top:192.1px;width:111.4px;height:66px;background:#c8c8c8;border-top:1px solid #b8b8b8;border-left:1px solid #bdbdbd"></div><div class="abs" style="left:722px;top:193.1px;width:9px;height:65px;background:#d2d2d2"></div><div class="abs" style="left:822.6px;top:193.1px;width:9.8px;height:65px;background:linear-gradient(90deg,#c8c8c8,#b4b4b4 50%,#8e8e8e)"></div><div class="abs" style="left:722px;top:256px;width:110.4px;height:2.1px;background:#a8a8a8"></div><div class="lbl" style="left:732.8px;top:195.04px;font-size:9.4px;transform-origin:0 0;transform:scaleX(0.897)">Spiral</div><div class="lbl" style="left:732.8px;top:211.64px;font-size:9.4px;transform-origin:0 0;transform:scaleX(0.945)">Intensity 3</div><div class="lbl" style="left:732.8px;top:228.34px;font-size:9.4px;transform-origin:0 0;transform:scaleX(0.945)">Intensity 2</div><div class="lbl" style="left:732.8px;top:244.74px;font-size:9.4px;transform-origin:0 0;transform:scaleX(0.945)">Intensity 1</div><svg class="abs" style="left:0;top:0" width="1024" height="576"><rect x="781" y="192.6" width="41" height="64" fill="#d8d8d8"/><rect x="782" y="193.6" width="38.9" height="11.9" fill="#000"/><polyline points="783.5,202.3 792.6,195.8 801.5,202.8 810.5,195.8 820.0,202.8" fill="none" stroke="#f2ea60" stroke-width="2.2" stroke-linejoin="round"/><circle cx="783.5" cy="202.3" r="1.9" fill="#f2ea60"/><circle cx="792.6" cy="195.8" r="1.9" fill="#f2ea60"/><circle cx="801.5" cy="202.8" r="1.9" fill="#f2ea60"/><circle cx="810.5" cy="195.8" r="1.9" fill="#f2ea60"/><circle cx="820.0" cy="202.8" r="1.9" fill="#f2ea60"/><rect x="782" y="210.4" width="38.9" height="12.2" fill="#000"/><polyline points="783.3,219.6 789.3,212.5 795.4,219.6 801.5,212.5 807.6,219.6 813.6,212.5 820.2,219.6" fill="none" stroke="#a8462c" stroke-width="1.2"/><rect x="782" y="227.0" width="38.9" height="12.2" fill="#000"/><polyline points="783.3,236.2 789.3,229.1 795.4,236.2 801.5,229.1 807.6,236.2 813.6,229.1 820.2,236.2" fill="none" stroke="#1cb01c" stroke-width="1.2"/><rect x="782" y="243.4" width="38.9" height="12.2" fill="#000"/><polyline points="783.3,252.6 789.3,245.5 795.4,252.6 801.5,245.5 807.6,252.6 813.6,245.5 820.2,252.6" fill="none" stroke="#2a72b8" stroke-width="1.2"/></svg><div class="lbl" style="left:320.9px;top:134.64px;font-size:9.4px;transform-origin:0 0;transform:scaleX(0.975)">min detection spacing</div><div class="lbl" style="left:320.9px;top:145.54px;font-size:9.4px;transform-origin:0 0;transform:scaleX(0.961)">Target dia must be big to be detected</div><div class="abs" style="left:375.9px;top:158.4px;width:40.2px;height:18.1px;background:#d8d8d8;border-top:2.2px solid #b6b6b6;border-left:2px solid #bcbcbc;border-right:3.5px solid #f2f2f2;border-bottom:3.5px solid #f2f2f2"></div><div class="num" style="left:379.2px;top:162.73px">0.3</div><div class="lbl" style="left:512.7px;top:146.74px;font-size:9.4px;transform-origin:0 0;transform:scaleX(0.955)">Target diameter</div><div class="abs" style="left:512.2px;top:159.6px;width:38.6px;height:15.9px;background:#d8d8d8;border-top:2.2px solid #b6b6b6;border-left:2px solid #bcbcbc;border-right:3.5px solid #f2f2f2;border-bottom:3.5px solid #f2f2f2"></div><div class="num" style="left:515.5px;top:161.73px">0.6</div><div class="lbl" style="left:583.8px;top:141.14px;font-size:9.4px;transform-origin:0 0;transform:scaleX(0.953)">G=Target will be detected</div><div class="lbl" style="left:583.8px;top:152.54px;font-size:9.4px;transform-origin:0 0;transform:scaleX(0.937)">R= Potential to miss target(increase sprials)</div><div class="abs" style="left:584.1px;top:164.2px;width:12px;height:12px;border-radius:50%;background:radial-gradient(circle at 40% 35%,#9cff70,#30d010 55%,#20a010);box-shadow:0 0 0 0.8px #e8e8e8"></div><div class="lbl" style="left:158.8px;top:219.14px;font-size:9.4px;transform-origin:0 0;transform:scaleX(0.950)">Num of Sprials</div><svg class="abs" style="left:0;top:0" width="1024" height="576"><path d="M154.6 230.6 C159.1 231.6 159.6 236.1 159.2 240.1 C159.6 244.1 159.1 248.6 154.6 249.6 C150.1 248.6 149.6 244.1 150.0 240.1 C149.6 236.1 150.1 231.6 154.6 230.6 z" fill="#d0d0d0" stroke="#a4a4a4" stroke-width="0.8"/><path d="M150.1 240.1 h9" stroke="#ededed" stroke-width="1.2"/><path d="M152.4 238.5 l2.2 -4.6 l2.2 4.6z M152.4 241.7 l2.2 4.6 l2.2 -4.6z" fill="#bcbcbc" stroke="#606060" stroke-width="1" stroke-linejoin="round"/></svg><div class="abs" style="left:160.2px;top:231.4px;width:37.8px;height:16.2px;background:#fafafa;border-top:2.2px solid #a8a8a8;border-left:1px solid #d0d0d0;border-right:3px solid #ececec;border-bottom:2.5px solid #ececec"></div><div class="num" style="left:162.9px;top:235.63px">10</div><div class="lbl" style="left:254.2px;top:238.54px;font-size:9.4px;transform-origin:0 0;transform:scaleX(0.901)">1-360</div><div class="lbl" style="left:158.8px;top:255.14px;font-size:9.4px;transform-origin:0 0;transform:scaleX(0.908)">Max R</div><svg class="abs" style="left:0;top:0" width="1024" height="576"><path d="M154.6 265.8 C159.1 266.8 159.6 271.3 159.2 275.3 C159.6 279.3 159.1 283.8 154.6 284.8 C150.1 283.8 149.6 279.3 150.0 275.3 C149.6 271.3 150.1 266.8 154.6 265.8 z" fill="#d0d0d0" stroke="#a4a4a4" stroke-width="0.8"/><path d="M150.1 275.3 h9" stroke="#ededed" stroke-width="1.2"/><path d="M152.4 273.7 l2.2 -4.6 l2.2 4.6z M152.4 276.9 l2.2 4.6 l2.2 -4.6z" fill="#bcbcbc" stroke="#606060" stroke-width="1" stroke-linejoin="round"/></svg><div class="abs" style="left:160.2px;top:266.6px;width:37.8px;height:16.2px;background:#fafafa;border-top:2.2px solid #a8a8a8;border-left:1px solid #d0d0d0;border-right:3px solid #ececec;border-bottom:2.5px solid #ececec"></div><div class="num" style="left:162.9px;top:270.83px">3</div><div class="lbl" style="left:240.4px;top:256.64px;font-size:9.4px;transform-origin:0 0;transform:scaleX(0.879)">Deg Step Size</div><svg class="abs" style="left:0;top:0" width="1024" height="576"><path d="M235.9 267.0 C240.4 268.0 240.9 272.5 240.5 276.5 C240.9 280.5 240.4 285.0 235.9 286.0 C231.4 285.0 230.9 280.5 231.3 276.5 C230.9 272.5 231.4 268.0 235.9 267.0 z" fill="#d0d0d0" stroke="#a4a4a4" stroke-width="0.8"/><path d="M231.4 276.5 h9" stroke="#ededed" stroke-width="1.2"/><path d="M233.7 274.9 l2.2 -4.6 l2.2 4.6z M233.7 278.1 l2.2 4.6 l2.2 -4.6z" fill="#bcbcbc" stroke="#606060" stroke-width="1" stroke-linejoin="round"/></svg><div class="abs" style="left:241.5px;top:267.8px;width:36.5px;height:16.2px;background:#fafafa;border-top:2.2px solid #a8a8a8;border-left:1px solid #d0d0d0;border-right:3px solid #ececec;border-bottom:2.5px solid #ececec"></div><div class="num" style="left:244.2px;top:272.03px">20</div><div class="lbl" style="left:158.8px;top:291.64px;font-size:9.4px;transform-origin:0 0;transform:scaleX(0.969)">distance between points min</div><svg class="abs" style="left:0;top:0" width="1024" height="576"><path d="M154.6 302.4 C159.1 303.4 159.6 307.9 159.2 311.9 C159.6 315.9 159.1 320.4 154.6 321.4 C150.1 320.4 149.6 315.9 150.0 311.9 C149.6 307.9 150.1 303.4 154.6 302.4 z" fill="#d0d0d0" stroke="#a4a4a4" stroke-width="0.8"/><path d="M150.1 311.9 h9" stroke="#ededed" stroke-width="1.2"/><path d="M152.4 310.3 l2.2 -4.6 l2.2 4.6z M152.4 313.5 l2.2 4.6 l2.2 -4.6z" fill="#bcbcbc" stroke="#606060" stroke-width="1" stroke-linejoin="round"/></svg><div class="abs" style="left:160.2px;top:303.2px;width:37.8px;height:16.2px;background:#fafafa;border-top:2.2px solid #a8a8a8;border-left:1px solid #d0d0d0;border-right:3px solid #ececec;border-bottom:2.5px solid #ececec"></div><div class="num" style="left:162.9px;top:307.43px">0.1</div><div class="lbl" style="left:205.0px;top:305.79px;font-size:9.4px;transform-origin:0 0;transform:scaleX(1.015)">condition</div><div class="lbl" style="left:134.7px;top:351.84px;font-size:9.4px;transform-origin:0 0;transform:scaleX(0.975)">x=((Max)/(num of spiral*360deg))*(deg)*cos(deg)</div><div class="lbl" style="left:134.7px;top:362.54px;font-size:9.4px;transform-origin:0 0;transform:scaleX(0.976)">y=((Max)/(num of spiral*360deg))*(deg)*sin(deg)</div><div class="lbl" style="left:134.7px;top:373.94px;font-size:9.4px;transform-origin:0 0;transform:scaleX(0.924)">DegStep=1Deg</div><div class="lbl" style="left:235.6px;top:427.64px;font-size:9.4px;transform-origin:0 0;transform:scaleX(0.996)">Num of points</div><div class="abs" style="left:235.0px;top:440.5px;width:39.3px;height:16.0px;background:#d8d8d8;border-top:2.2px solid #b6b6b6;border-left:2px solid #bcbcbc;border-right:3.5px solid #f2f2f2;border-bottom:3.5px solid #f2f2f2"></div><div class="num" style="left:238.3px;top:442.73px">63</div><div class="lbl" style="left:812.6px;top:302.54px;font-size:9.4px;transform-origin:0 0;transform:scaleX(0.921)">Target</div><div class="lbl" style="left:819.5px;top:319.94px;font-size:9.4px;transform-origin:0 0;transform:scaleX(0.950)">x center</div><svg class="abs" style="left:0;top:0" width="1024" height="576"><path d="M816.0 332.2 C820.5 333.2 821.0 337.7 820.6 341.7 C821.0 345.7 820.5 350.2 816.0 351.2 C811.5 350.2 811.0 345.7 811.4 341.7 C811.0 337.7 811.5 333.2 816.0 332.2 z" fill="#d0d0d0" stroke="#a4a4a4" stroke-width="0.8"/><path d="M811.5 341.7 h9" stroke="#ededed" stroke-width="1.2"/><path d="M813.8 340.1 l2.2 -4.6 l2.2 4.6z M813.8 343.3 l2.2 4.6 l2.2 -4.6z" fill="#bcbcbc" stroke="#606060" stroke-width="1" stroke-linejoin="round"/></svg><div class="abs" style="left:821.6px;top:333.0px;width:35.4px;height:15.7px;background:#fafafa;border-top:2.2px solid #a8a8a8;border-left:1px solid #d0d0d0;border-right:3px solid #ececec;border-bottom:2.5px solid #ececec"></div><div class="num" style="left:824.3px;top:336.73px">1</div><div class="lbl" style="left:819.5px;top:351.84px;font-size:9.4px;transform-origin:0 0;transform:scaleX(0.927)">Y center</div><svg class="abs" style="left:0;top:0" width="1024" height="576"><path d="M816.0 363.8 C820.5 364.8 821.0 369.3 820.6 373.3 C821.0 377.3 820.5 381.8 816.0 382.8 C811.5 381.8 811.0 377.3 811.4 373.3 C811.0 369.3 811.5 364.8 816.0 363.8 z" fill="#d0d0d0" stroke="#a4a4a4" stroke-width="0.8"/><path d="M811.5 373.3 h9" stroke="#ededed" stroke-width="1.2"/><path d="M813.8 371.7 l2.2 -4.6 l2.2 4.6z M813.8 374.9 l2.2 4.6 l2.2 -4.6z" fill="#bcbcbc" stroke="#606060" stroke-width="1" stroke-linejoin="round"/></svg><div class="abs" style="left:821.6px;top:364.6px;width:35.4px;height:16.0px;background:#fafafa;border-top:2.2px solid #a8a8a8;border-left:1px solid #d0d0d0;border-right:3px solid #ececec;border-bottom:2.5px solid #ececec"></div><div class="num" style="left:824.3px;top:368.63px">1</div><div class="abs" style="left:904.3px;top:529.6px;font-size:16px;line-height:1;color:#3aa0e8;letter-spacing:0px">AC</div></body></html>
